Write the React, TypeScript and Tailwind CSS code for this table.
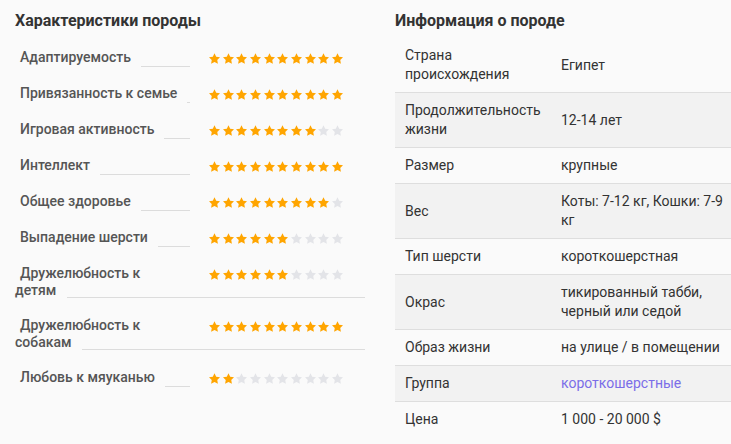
const traits: { label: string[]; score: number }[] = [
  { label: ["Адаптируемость"], score: 10 },
  { label: ["Привязанность к семье"], score: 10 },
  { label: ["Игровая активность"], score: 8 },
  { label: ["Интеллект"], score: 10 },
  { label: ["Общее здоровье"], score: 9 },
  { label: ["Выпадение шерсти"], score: 6 },
  { label: ["Дружелюбность к", "детям"], score: 6 },
  { label: ["Дружелюбность к", "собакам"], score: 10 },
  { label: ["Любовь к мяуканью"], score: 2 },
];

const info: { name: string; value: string; link?: boolean }[] = [
  { name: "Страна происхождения", value: "Египет" },
  { name: "Продолжительность жизни", value: "12-14 лет" },
  { name: "Размер", value: "крупные" },
  { name: "Вес", value: "Коты: 7-12 кг, Кошки: 7-9 кг" },
  { name: "Тип шерсти", value: "короткошерстная" },
  { name: "Окрас", value: "тикированный табби, черный или седой" },
  { name: "Образ жизни", value: "на улице / в помещении" },
  { name: "Группа", value: "короткошерстные", link: true },
  { name: "Цена", value: "1 000 - 20 000 $" },
];

function Stars({ score }: { score: number }) {
  return (
    <div className="flex gap-[2.7px] mt-[5px] ml-[19px] mr-[22px] shrink-0">
      {Array.from({ length: 10 }).map((_, i) => (
        <svg key={i} width="11" height="11" viewBox="2 2 20 19.2">
          <path
            d="M12 2l3.09 6.26L22 9.27l-5 4.87 1.18 6.88L12 17.77l-6.18 3.25L7 14.14 2 9.27l6.91-1.01L12 2z"
            fill={i < score ? "#ffa500" : "#e3e4e8"}
          />
        </svg>
      ))}
    </div>
  );
}

function TraitRow({ label, score }: { label: string[]; score: number }) {
  if (label.length === 1) {
    return (
      <div className="flex items-start h-[36px]">
        <span className="pl-[5px] leading-[18px] whitespace-nowrap">{label[0]}</span>
        <div className="flex-1 ml-[10px] h-[19px] border-b border-[#dcdcdc]" />
        <Stars score={score} />
      </div>
    );
  }
  return (
    <div className="h-[52px]">
      <div className="flex items-start">
        <span className="pl-[5px] leading-[18px] whitespace-nowrap">{label[0]}</span>
        <div className="flex-1" />
        <Stars score={score} />
      </div>
      <div className="flex items-start -mt-[1px]">
        <span className="leading-[18px]">{label[1]}</span>
        <div className="flex-1 ml-[11px] h-[17px] border-b border-[#dcdcdc]" />
      </div>
    </div>
  );
}

export default function App() {
  return (
    <div
      className="w-full min-h-screen overflow-hidden bg-[#fafafa]"
      style={{ fontFamily: "Roboto, 'Noto Sans', sans-serif" }}
    >
      <div className="flex gap-[30px] pl-[15px] pt-[11px] w-[760px]">
        <section className="w-[350px] shrink-0">
          <h2 className="text-[16px] leading-[20px] font-bold text-[#333]">Характеристики породы</h2>
          <div className="mt-[17px] text-[14px] text-[#555] font-medium">
            {traits.map((t) => (
              <TraitRow key={t.label.join(" ")} label={t.label} score={t.score} />
            ))}
          </div>
        </section>

        <section className="w-[350px] shrink-0">
          <h2 className="text-[16px] leading-[20px] font-bold text-[#333]">Информация о породе</h2>
          <table className="mt-[7px] w-[350px] table-fixed border-collapse text-[14px] leading-[19px] text-[#333]">
            <colgroup>
              <col className="w-[156px]" />
              <col />
            </colgroup>
            <tbody>
              {info.map((row, i) => (
                <tr
                  key={row.name}
                  className={`${i % 2 === 1 ? "bg-[#f2f2f2]" : ""} ${
                    i < info.length - 1 ? "border-b border-[#dedede]" : ""
                  }`}
                >
                  <td className="px-[10px] py-[8px] align-middle leading-[19px]">{row.name}</td>
                  <td className="px-[10px] py-[8px] align-middle leading-[19px]">
                    {row.link ? <a className="text-[#7b6ee8]">{row.value}</a> : row.value}
                  </td>
                </tr>
              ))}
            </tbody>
          </table>
        </section>
      </div>
    </div>
  );
}
